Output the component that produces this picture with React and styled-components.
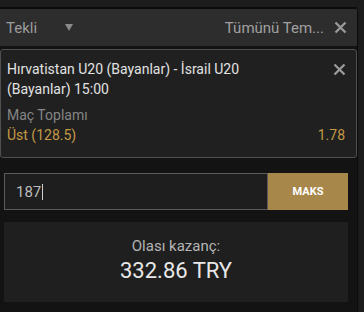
import React from 'react';
import styled, { createGlobalStyle } from 'styled-components';

const GlobalStyle = createGlobalStyle`
  html, body {
    margin: 0;
    padding: 0;
    background: #1c1c1c;
    font-family: Roboto, "Liberation Sans", Arial, sans-serif;
  }
`;

const Page = styled.div`
  display: flex;
  height: 312px;
  padding-top: 7px;
  box-sizing: border-box;
`;

const Panel = styled.div`
  width: 357px;
  background: #131313;
  border-top: 2px solid #0b0b0b;
  display: flex;
  flex-direction: column;
`;

const ScrollTrack = styled.div`
  flex: 1;
  border-left: 1px solid #0b0b0b;
  margin-top: 2px;
  background: #1c1c1c;
`;

const Header = styled.div`
  height: 37px;
  background: #2d2d2d;
  display: flex;
  align-items: center;
  padding: 0 10px 0 6px;
  color: #9c9c9c;
  font-size: 15px;
`;

const Caret = styled.span`
  width: 0;
  height: 0;
  margin-left: 28px;
  border-left: 4px solid transparent;
  border-right: 4px solid transparent;
  border-top: 7px solid #8a8a8a;
`;

const ClearAll = styled.span`
  margin-left: auto;
  white-space: nowrap;
  color: #a0a0a0;
`;

const CloseButton = styled.button`
  background: none;
  border: none;
  padding: 0;
  margin-left: ${p => p.$gap || 0}px;
  margin-top: ${p => p.$top || 0}px;
  width: 14px;
  height: 14px;
  display: flex;
  align-items: center;
  justify-content: center;
  cursor: pointer;
  flex-shrink: 0;
`;

const Card = styled.div`
  margin-top: 3px;
  background: #202020;
  border: 1px solid #505050;
  border-radius: 3px;
  padding: 9px 10px 12px 6px;
`;

const CardTop = styled.div`
  display: flex;
  align-items: flex-start;
`;

const Title = styled.div`
  flex: 1;
  color: #e2e2e2;
  font-size: 14px;
  line-height: 20px;
  padding-right: 40px;
`;

const Market = styled.div`
  margin-top: 7px;
  color: #858585;
  font-size: 14px;
  line-height: 19px;
`;

const OddsRow = styled.div`
  display: flex;
  justify-content: space-between;
  color: #c49a45;
  font-size: 14px;
  line-height: 20px;
  padding-right: 1px;
`;

const Footer = styled.div`
  padding: 15px 9px 0 4px;
  display: flex;
  flex-direction: column;
  gap: 12px;
`;

const StakeRow = styled.div`
  display: flex;
  height: 37px;
`;

const StakeInput = styled.div`
  flex: 1;
  background: #1e1e1e;
  border: 1px solid #5a5a5a;
  display: flex;
  align-items: center;
  padding-left: 11px;
  color: #bcbcbc;
  font-size: 15px;
`;

const TextCaret = styled.span`
  width: 1px;
  height: 16px;
  margin-left: 1px;
  background: #d0d0d0;
`;

const MaxButton = styled.button`
  width: 80px;
  border: none;
  background: #a8874a;
  color: #ffffff;
  font-family: inherit;
  font-weight: 700;
  font-size: 11px;
  cursor: pointer;
`;

const Winnings = styled.div`
  height: 80px;
  background: #1f1f1f;
  display: flex;
  flex-direction: column;
  align-items: center;
  justify-content: center;
  padding-bottom: 2px;
  box-sizing: border-box;
`;

const WinLabel = styled.div`
  color: #b4b4b4;
  font-size: 15px;
  line-height: 20px;
`;

const WinAmount = styled.div`
  color: #e8e8e8;
  font-size: 22px;
  line-height: 30px;
`;

const XIcon = () => (
  <svg width="13" height="13" viewBox="0 0 13 13">
    <path d="M1.5 1.5l10 10M11.5 1.5l-10 10" stroke="#9a9a9a" strokeWidth="2.3" strokeLinecap="butt" />
  </svg>
);

export default function App() {
  return (
    <>
      <GlobalStyle />
      <Page>
        <Panel>
          <Header>
            <span>Tekli</span>
            <Caret />
            <ClearAll>Tümünü Tem...</ClearAll>
            <CloseButton $gap={9}><XIcon /></CloseButton>
          </Header>
          <Card>
            <CardTop>
              <Title>Hırvatistan U20 (Bayanlar) - İsrail U20 (Bayanlar) 15:00</Title>
              <CloseButton $top={3}><XIcon /></CloseButton>
            </CardTop>
            <Market>Maç Toplamı</Market>
            <OddsRow>
              <span>Üst (128.5)</span>
              <span>1.78</span>
            </OddsRow>
          </Card>
          <Footer>
            <StakeRow>
              <StakeInput>187<TextCaret /></StakeInput>
              <MaxButton>MAKS</MaxButton>
            </StakeRow>
            <Winnings>
              <WinLabel>Olası kazanç:</WinLabel>
              <WinAmount>332.86 TRY</WinAmount>
            </Winnings>
          </Footer>
        </Panel>
        <ScrollTrack />
      </Page>
    </>
  );
}
